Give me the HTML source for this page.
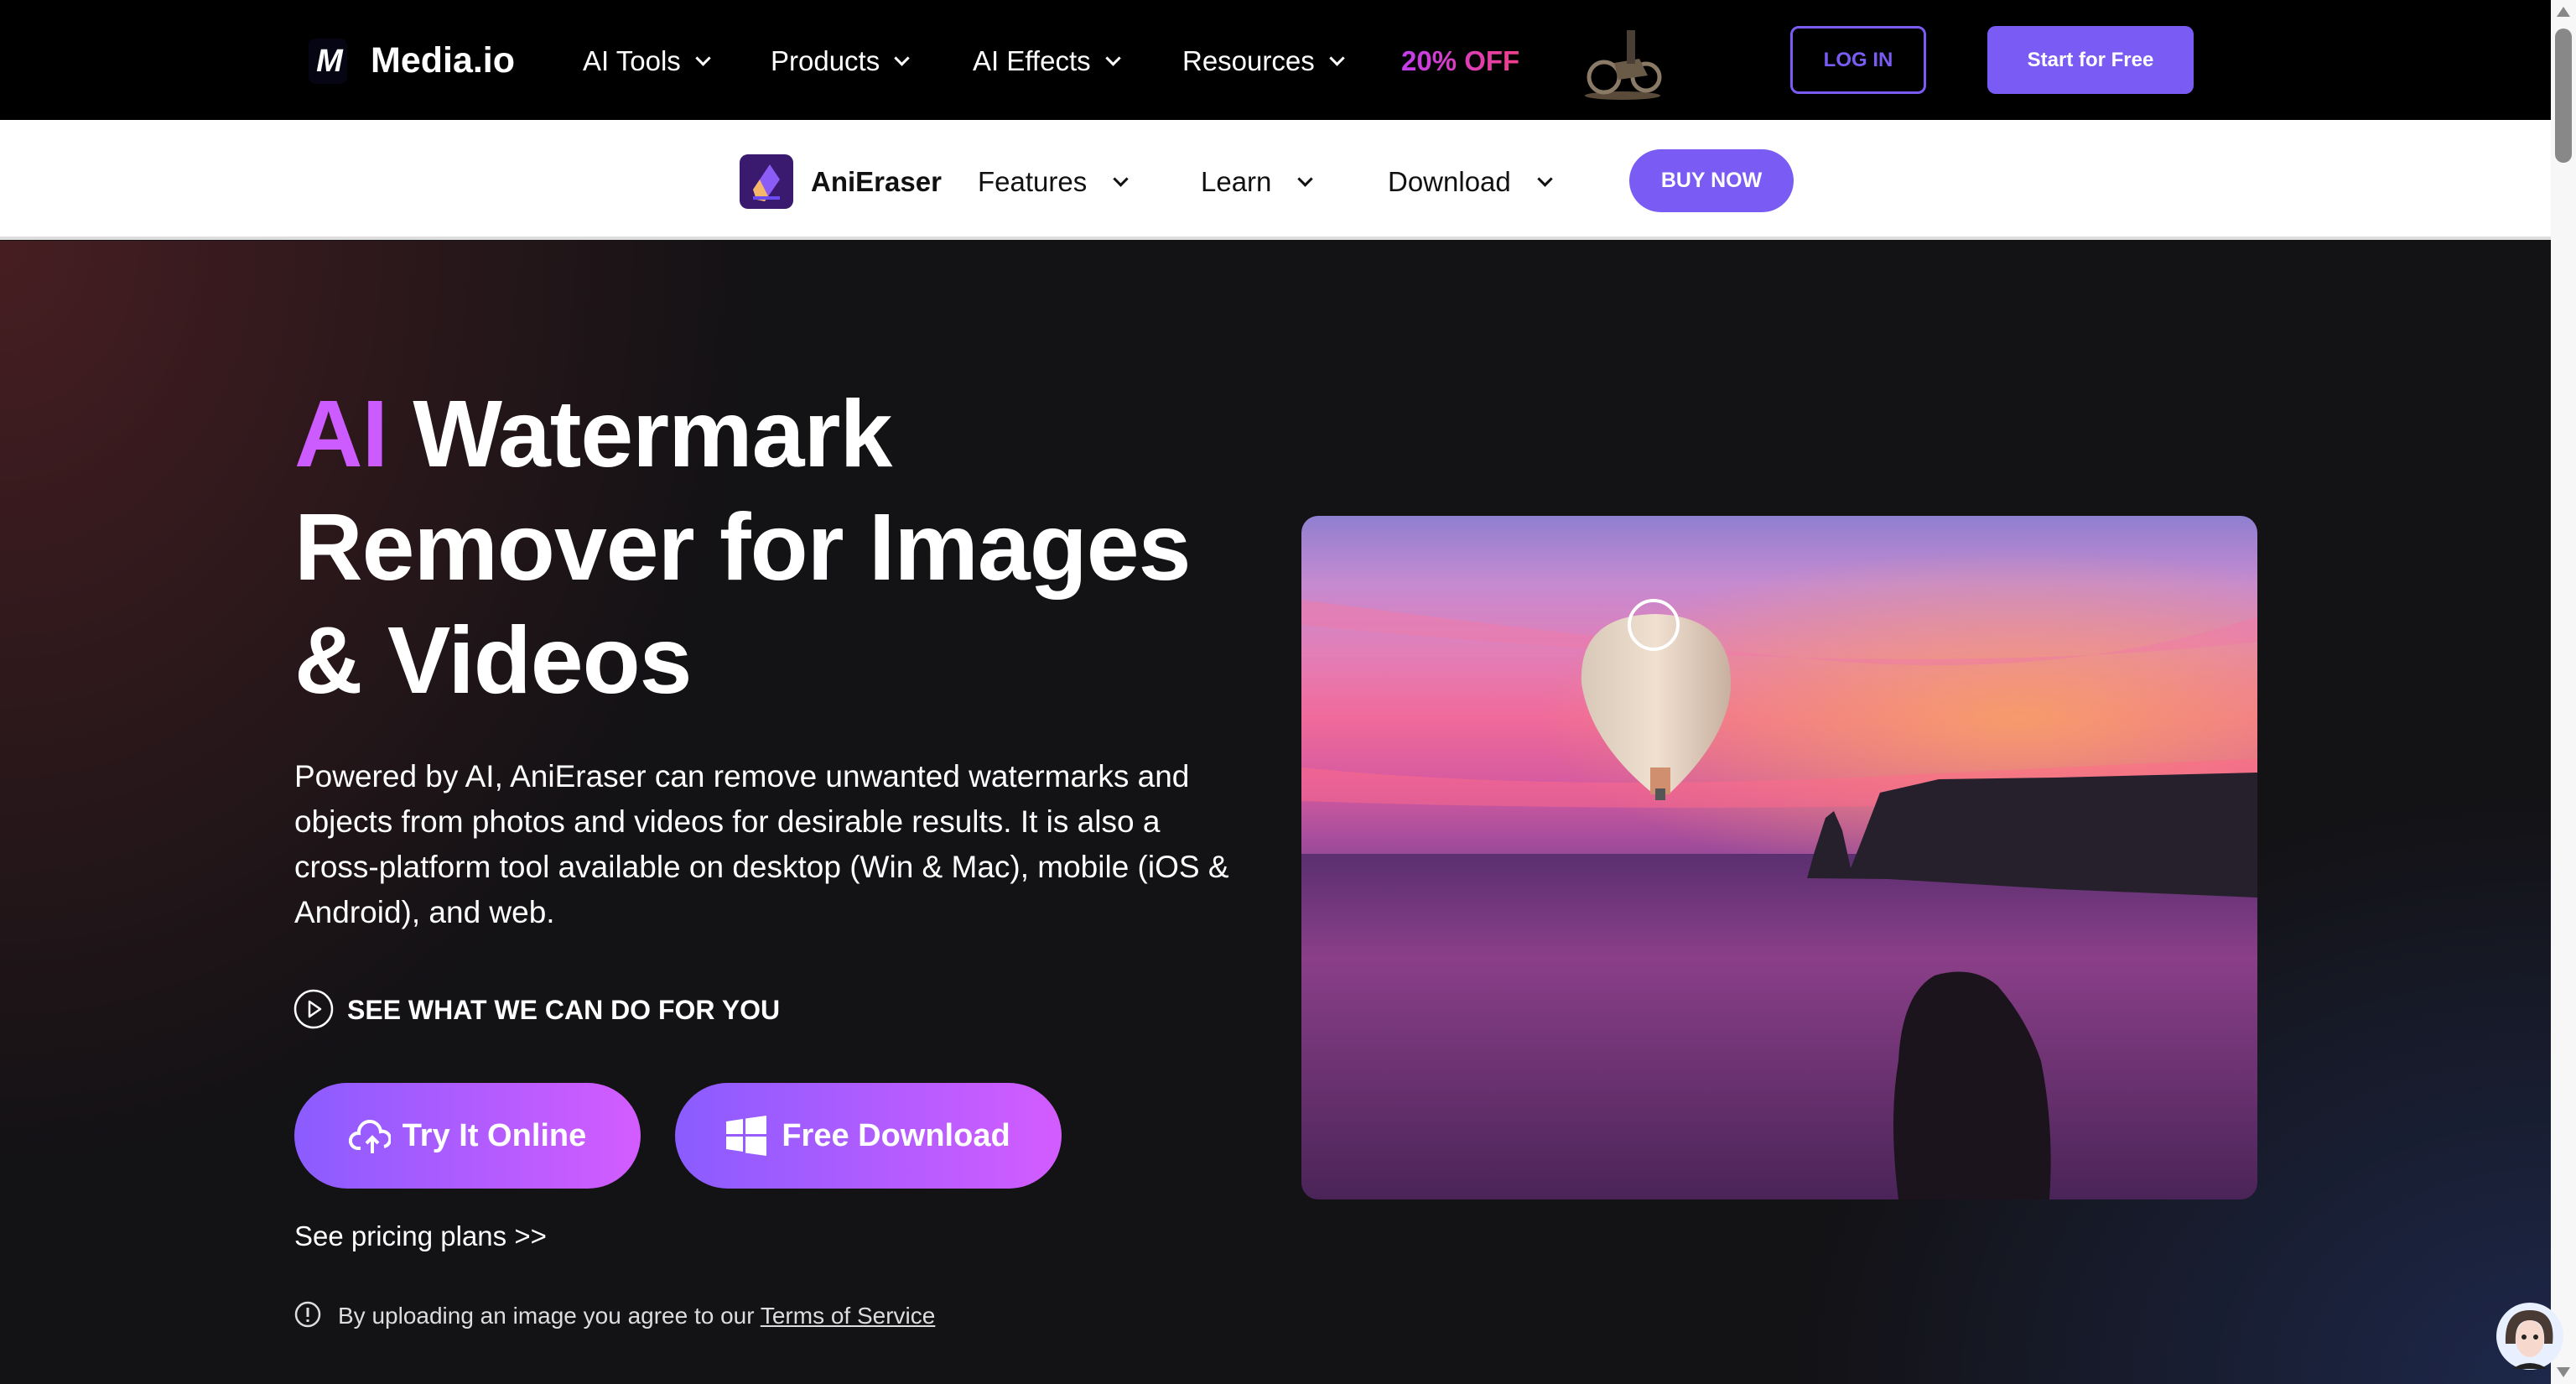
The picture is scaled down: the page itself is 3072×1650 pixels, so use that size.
<!DOCTYPE html>
<html><head><meta charset="utf-8"><style>
*{margin:0;padding:0;box-sizing:border-box}
html,body{width:3072px;height:1650px;overflow:hidden;font-family:"Liberation Sans",sans-serif}
body{position:relative;background:#131215}
.a{position:absolute;white-space:nowrap}
.top{position:absolute;left:0;top:0;width:3042px;height:143px;background:#000}
.sub{position:absolute;left:0;top:143px;width:3042px;height:143px;background:#fff;border-bottom:4px solid #ddd}
.hero{position:absolute;left:0;top:287px;width:3042px;height:1363px;background:
radial-gradient(ellipse 900px 1100px at 0% 0%,rgba(80,32,36,.85),rgba(80,32,36,0) 100%),
radial-gradient(ellipse 900px 700px at 100% 100%,rgba(30,42,80,.9),rgba(30,42,80,0) 100%),#131215}
.nav{color:#fff;font-size:33px;top:54px}
.chev{display:inline-block;width:13px;height:13px;border-right:3px solid currentColor;border-bottom:3px solid currentColor;transform:rotate(45deg);margin-left:20px;position:relative;top:-8px}
.sn{color:#111;font-size:33px;top:198px}
.btn{position:absolute;border-radius:63px;background:linear-gradient(90deg,#8a5cff,#d35cff);color:#fff;font-weight:bold;font-size:38px;display:flex;align-items:center;justify-content:center}
</style></head><body>
<div class="top"></div>
<div class="a" style="left:368px;top:46px;width:46px;height:54px;background:#050514;border-radius:8px;color:#fff;font-weight:bold;font-style:italic;font-size:38px;text-align:center;line-height:54px;letter-spacing:-4px">M</div>
<div class="a" style="left:442px;top:48px;color:#fff;font-size:43px;font-weight:bold">Media.io</div>
<div class="a nav" style="left:695px">AI Tools<span class="chev"></span></div>
<div class="a nav" style="left:919px">Products<span class="chev"></span></div>
<div class="a nav" style="left:1160px">AI Effects<span class="chev"></span></div>
<div class="a nav" style="left:1410px">Resources<span class="chev"></span></div>
<div class="a" style="left:1671px;top:54px;font-size:33px;font-weight:bold;background:linear-gradient(90deg,#c33ef0,#f03e8a);-webkit-background-clip:text;color:transparent">20% OFF</div>
<svg class="a" style="left:1885px;top:30px" width="100" height="90" viewBox="0 0 100 90"><ellipse cx="50" cy="84" rx="45" ry="5" fill="#5a4a3a"/><circle cx="28" cy="62" r="18" fill="none" stroke="#8a7a66" stroke-width="5"/><circle cx="78" cy="62" r="16" fill="none" stroke="#8a7a66" stroke-width="5"/><path d="M40 45 L70 40 L80 60 L45 65Z" fill="#6a5a48"/><rect x="55" y="6" width="10" height="40" fill="#4a3f35"/></svg>
<div class="a" style="left:2135px;top:31px;width:162px;height:81px;border:3px solid #7a5cf5;border-radius:10px;color:#7a5cf5;font-weight:bold;font-size:24px;display:flex;align-items:center;justify-content:center">LOG IN</div>
<div class="a" style="left:2370px;top:31px;width:246px;height:81px;background:#7a5cf5;border-radius:10px;color:#fff;font-weight:bold;font-size:24px;display:flex;align-items:center;justify-content:center">Start for Free</div>

<div class="sub"></div>
<svg class="a" style="left:882px;top:184px" width="64" height="65" viewBox="0 0 64 65"><rect width="64" height="65" rx="10" fill="#3a1a6e"/><path d="M16 42 L36 12 L48 30 L30 56Z" fill="#8b5cf6"/><path d="M16 42 L24 30 L34 50 L30 56 L20 54Z" fill="#f5b86a"/><rect x="16" y="50" width="32" height="4" fill="#6a4cf0"/></svg>
<div class="a" style="left:967px;top:198px;font-size:33px;font-weight:bold;color:#111">AniEraser</div>
<div class="a sn" style="left:1166px">Features<span class="chev" style="margin-left:34px"></span></div>
<div class="a sn" style="left:1432px">Learn<span class="chev" style="margin-left:34px"></span></div>
<div class="a sn" style="left:1655px">Download<span class="chev" style="margin-left:34px"></span></div>
<div class="a" style="left:1943px;top:178px;width:196px;height:75px;background:#7a5cf5;border-radius:38px;color:#fff;font-weight:bold;font-size:25px;display:flex;align-items:center;justify-content:center">BUY NOW</div>

<div class="hero"></div>
<div class="a" style="left:351px;top:450px;color:#fff;font-weight:bold;font-size:113px;line-height:135px;letter-spacing:-1px"><span style="color:#cc5cff">AI</span> Watermark<br>Remover for Images<br>&amp; Videos</div>
<div class="a" style="left:351px;top:899px;color:#fff;font-size:37px;line-height:54px">Powered by AI, AniEraser can remove unwanted watermarks and<br>objects from photos and videos for desirable results. It is also a<br>cross-platform tool available on desktop (Win &amp; Mac), mobile (iOS &amp;<br>Android), and web.</div>
<svg class="a" style="left:350px;top:1179px" width="48" height="48" viewBox="0 0 48 48"><circle cx="24" cy="24" r="22" fill="none" stroke="#fff" stroke-width="2.5"/><path d="M19 15 L32 24 L19 33Z" fill="none" stroke="#fff" stroke-width="2.5" stroke-linejoin="round"/></svg>
<div class="a" style="left:414px;top:1186px;color:#fff;font-weight:bold;font-size:32px">SEE WHAT WE CAN DO FOR YOU</div>
<div class="btn" style="left:351px;top:1291px;width:413px;height:126px"><svg width="50" height="46" viewBox="0 0 50 46" style="margin-right:14px"><path d="M14 38 H10 A9 9 0 0 1 12 20 A13 13 0 0 1 38 18 A9 9 0 0 1 42 36" fill="none" stroke="#fff" stroke-width="4"/><path d="M28 44 V26 M21 32 L28 25 L35 32" fill="none" stroke="#fff" stroke-width="4"/></svg>Try It Online</div>
<div class="btn" style="left:805px;top:1291px;width:461px;height:126px"><svg width="48" height="48" viewBox="0 0 48 48" style="margin-right:18px"><path d="M0 7 L20 4 V22 H0Z M23 3.5 L48 0 V22 H23Z M0 25 H20 V43 L0 40Z M23 25 H48 V48 L23 44.5Z" fill="#fff"/></svg>Free Download</div>
<div class="a" style="left:351px;top:1455px;color:#fff;font-size:33px">See pricing plans &gt;&gt;</div>
<svg class="a" style="left:351px;top:1551px" width="32" height="32" viewBox="0 0 32 32"><circle cx="16" cy="16" r="14" fill="none" stroke="#ddd" stroke-width="2.5"/><path d="M16 8 V19 M16 22 V25" stroke="#ddd" stroke-width="3"/></svg>
<div class="a" style="left:403px;top:1553px;color:#ddd;font-size:28px">By uploading an image you agree to our <u>Terms of Service</u></div>

<div class="a" style="left:1552px;top:615px;width:1140px;height:815px;border-radius:20px;overflow:hidden">
<svg width="1140" height="815" viewBox="0 0 1140 815">
<defs>
<linearGradient id="sky" x1="0" y1="0" x2="0" y2="1"><stop offset="0" stop-color="#8f7fd0"/><stop offset=".2" stop-color="#c58ad0"/><stop offset=".4" stop-color="#e27fb8"/><stop offset=".6" stop-color="#f06a9a"/><stop offset=".8" stop-color="#d45aa0"/><stop offset="1" stop-color="#9a4a9a"/></linearGradient>
<linearGradient id="sea" x1="0" y1="0" x2="0" y2="1"><stop offset="0" stop-color="#5a2f70"/><stop offset=".3" stop-color="#8a3f88"/><stop offset="1" stop-color="#4a2458"/></linearGradient>
<radialGradient id="glow" cx=".75" cy=".6" r=".5"><stop offset="0" stop-color="#f8a860" stop-opacity=".8"/><stop offset="1" stop-color="#f8a860" stop-opacity="0"/></radialGradient>
<linearGradient id="bal" x1="0" y1="0" x2="1" y2="0"><stop offset="0" stop-color="#d8c8b8"/><stop offset=".5" stop-color="#f0e0d0"/><stop offset="1" stop-color="#c8b0a0"/></linearGradient>
</defs>
<rect width="1140" height="403" fill="url(#sky)"/>
<rect width="1140" height="403" fill="url(#glow)"/>
<path d="M0 100 Q300 140 600 170 T1140 120 V150 Q700 200 0 130Z" fill="#f07aa8" opacity=".5"/>
<path d="M0 300 Q300 330 700 310 T1140 290 V330 Q600 360 0 340Z" fill="#ff6a8a" opacity=".5"/>
<rect y="403" width="1140" height="412" fill="url(#sea)"/>
<path d="M603 432 L612 400 L625 360 L635 352 L645 375 L655 420 L665 395 L690 330 L760 314 L900 312 L1140 306 V455 L900 445 L700 433Z" fill="#26202c"/>
<path d="M712 815 Q700 720 712 650 Q716 570 755 548 Q800 535 830 560 Q865 600 882 650 Q898 730 892 815Z" fill="#1b141c"/>
<path d="M334 200 Q330 118 423 117 Q515 120 512 205 Q508 265 440 330 L418 330 Q345 270 334 200Z" fill="url(#bal)"/>
<rect x="416" y="300" width="24" height="32" fill="#d09070"/>
<rect x="422" y="325" width="12" height="14" fill="#555"/>
<ellipse cx="420" cy="130" rx="29" ry="29" fill="none" stroke="#fff" stroke-width="4"/>
</svg></div>

<div class="a" style="left:3042px;top:0;width:30px;height:1650px;background:#f7f7f7"></div>
<div class="a" style="left:3047px;top:34px;width:20px;height:160px;background:#888;border-radius:10px"></div>
<div class="a" style="left:3049px;top:8px;width:0;height:0;border-left:8px solid transparent;border-right:8px solid transparent;border-bottom:12px solid #888"></div>
<div class="a" style="left:3049px;top:1630px;width:0;height:0;border-left:8px solid transparent;border-right:8px solid transparent;border-top:12px solid #888"></div>
<svg class="a" style="left:2976px;top:1552px" width="82" height="82" viewBox="0 0 82 82"><circle cx="41" cy="41" r="40" fill="#e8f0ff"/><path d="M12 50 Q10 10 41 10 Q72 10 68 50 L58 50 Q60 22 41 22 Q22 22 24 50Z" fill="#4a3a34"/><ellipse cx="41" cy="44" rx="17" ry="22" fill="#f6d8cc"/><circle cx="34" cy="42" r="3" fill="#222"/><circle cx="48" cy="42" r="3" fill="#222"/><path d="M20 80 Q41 66 62 80Z" fill="#222"/></svg>
</body></html>
